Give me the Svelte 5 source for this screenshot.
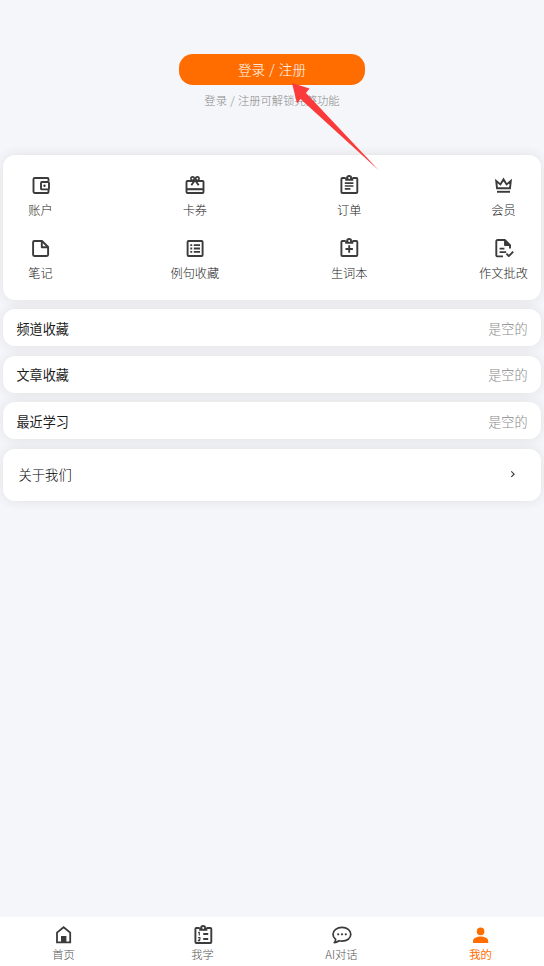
<script lang="ts">
  let active = $state('me');

  const tools = [
    { icon: 'wallet', label: '账户' },
    { icon: 'gift', label: '卡券' },
    { icon: 'order', label: '订单' },
    { icon: 'crown', label: '会员' },
    { icon: 'note', label: '笔记' },
    { icon: 'list', label: '例句收藏' },
    { icon: 'words', label: '生词本' },
    { icon: 'essay', label: '作文批改' },
  ];

  const rows = ['频道收藏', '文章收藏', '最近学习'];

  const tabs = [
    { id: 'home', label: '首页' },
    { id: 'study', label: '我学' },
    { id: 'chat', label: 'AI对话' },
    { id: 'me', label: '我的' },
  ];
</script>

{#snippet clipboard()}
  <path d="M8.5 5H5.4a1 1 0 0 0-1 1v13a1 1 0 0 0 1 1h13.9a1 1 0 0 0 1-1V6a1 1 0 0 0-1-1H16" />
  <path d="M8.2 4.4h1.6a2.5 2.2 0 0 1 4.9 0h1.6v3.3H8.2z M12.2 4.1a.9.9 0 1 0 .01 0z" fill="currentColor" fill-rule="evenodd" stroke="none" />
  <path d="M9.8 4.8a2.4 2.1 0 0 1 4.8 0" stroke-width="1.2" />
{/snippet}

{#snippet icon(name: string)}
  <svg class="icon" viewBox="0 0 24 24" width="24" height="24" fill="none" stroke="currentColor" stroke-width="1.9" stroke-linejoin="round">
    {#if name === 'wallet'}
      <path d="M19.5 8V6a1 1 0 0 0-1-1H5.7a1.2 1.2 0 0 0-1.2 1.2v12.6A1.2 1.2 0 0 0 5.7 20h12.8a1 1 0 0 0 1-1v-2" />
      <rect x="12" y="9" width="8" height="7.4" rx="1" />
      <circle cx="15.5" cy="12.7" r="1.2" fill="currentColor" stroke="none" />
    {:else if name === 'gift'}
      <rect x="3.5" y="8" width="17" height="12" rx="1" />
      <path d="M3.5 16.2h17" stroke-width="2.1" />
      <circle cx="9.6" cy="5.6" r="1.7" stroke-width="1.6" />
      <circle cx="14.4" cy="5.6" r="1.7" stroke-width="1.6" />
      <path d="M12 7l-3.7 5.3M12 7l3.7 5.3" />
    {:else if name === 'order'}
      {@render clipboard()}
      <path d="M7.8 10.2h8.6M7.8 13h8.6M7.8 15.8h5.6" stroke-width="1.7" />
    {:else if name === 'crown'}
      <path d="M6 15.2L5.2 8l4.2 3.4 3.1-5 3.1 5L19.8 8l-.8 7.2z" stroke-linejoin="miter" />
      <path d="M6 18.8h13" />
    {:else if name === 'note'}
      <path d="M13 5H5.3a1.2 1.2 0 0 0-1.2 1.2v12.6A1.2 1.2 0 0 0 5.3 20h12.6a1.2 1.2 0 0 0 1.2-1.2V11z" />
      <path d="M12.8 5v6.2h6.3" />
    {:else if name === 'list'}
      <rect x="4.6" y="5" width="15" height="15" rx="1" />
      <path d="M7.3 9.1h1.9M7.3 12.5h1.9M7.3 15.9h1.9M10.8 9.1h6.2M10.8 12.5H17M10.8 15.9H17" stroke-width="1.9" />
    {:else if name === 'words'}
      {@render clipboard()}
      <path d="M12.2 9.3v7.4M8.5 13h7.4" />
    {:else if name === 'essay'}
      <path d="M12 20.4H6.5a1.2 1.2 0 0 1-1.2-1.2V5.2A1.2 1.2 0 0 1 6.5 4h7.3L19 9.2v3.4" />
      <path d="M13.6 4v5.5H19z" fill="currentColor" stroke-width="1" />
      <path d="M8.6 12.6h4.8M8.6 16.2h6.6" stroke-width="1.8" />
      <path d="M15.4 17.7l2.4 2.4 4.4-4.4" />
    {:else if name === 'home'}
      <path d="M5 19.4V9.6L11.6 4.2l6.6 5.4v9.8z" stroke-width="1.8" stroke-linejoin="miter" />
      <path d="M9 19v-6h5.4v6z" fill="currentColor" stroke="none" />
    {:else if name === 'study'}
      {@render clipboard()}
      <path d="M12.2 11h5M12.2 16h5" />
      <path d="M7.2 9.8l1.1-.6v3.4M7.1 14.6H9v1.5l-1.8 1.5H9.2" stroke-width="1.1" />
    {:else if name === 'chat'}
      <path d="M5.6 16.3C3.9 15 3 13.3 3 11.3 3 7.4 7 4.4 12 4.4s8.8 3 8.8 6.9-3.9 6.9-8.8 6.9c-1 0-2-.1-2.9-.4-1.3.9-3 1.8-4.8 1.9 1-1 1.5-2.2 1.3-3.4z" stroke-width="1.7" />
      <g fill="currentColor" stroke="none">
        <circle cx="8.2" cy="11.3" r="1.1" />
        <circle cx="12" cy="11.3" r="1.1" />
        <circle cx="15.8" cy="11.3" r="1.1" />
      </g>
    {:else if name === 'me'}
      <g fill="currentColor" stroke="none">
        <circle cx="11.6" cy="8.4" r="3.8" />
        <path d="M4 20v-2c0-3 4-4.5 7.6-4.5S19.2 15 19.2 18v2z" />
      </g>
    {/if}
  </svg>
{/snippet}

<div class="page">
  <header class="hero">
    <button class="login">登录 / 注册</button>
    <p class="hint">登录 / 注册可解锁完整功能</p>
    <svg class="pointer" viewBox="0 0 88 88" width="88" height="88" aria-hidden="true">
      <path d="M0 0l17.5 5.5-3.5 4.5L87 87.5 8.5 16 5 20.5z" fill="#fb3b3b" />
    </svg>
  </header>

  <main class="cards">
    <section class="card tools">
      {#each tools as t}
        <button class="tool">
          {@render icon(t.icon)}
          <span>{t.label}</span>
        </button>
      {/each}
    </section>

    {#each rows as r}
      <section class="card row">
        <span>{r}</span>
        <span class="empty">是空的</span>
      </section>
    {/each}

    <section class="card about">
      <span>关于我们</span>
      <svg viewBox="0 0 8 8" width="8" height="8" fill="none" stroke="#333" stroke-width="1.1">
        <path d="M2.3 1.4L5.1 4.2 2.3 6.9" />
      </svg>
    </section>
  </main>

  <nav class="tabs">
    {#each tabs as t}
      <button class="tab" class:active={active === t.id} onclick={() => (active = t.id)}>
        {@render icon(t.id)}
        <span>{t.label}</span>
      </button>
    {/each}
  </nav>
</div>

<style>
  :global(body) { margin: 0; background: #f5f6fa; }

  .page {
    height: 966px; overflow: hidden;
    display: flex; flex-direction: column;
    background: #f5f6fa; color: #111;
    font-family: 'Noto Sans CJK SC', 'Noto Sans', sans-serif;
    font-weight: 300;
  }
  button {
    margin: 0; padding: 0; border: 0; background: none;
    font: inherit; color: inherit; cursor: pointer;
  }
  .icon { display: block; color: #3b3b3b; }

  .hero {
    position: relative; box-sizing: border-box;
    flex: 0 0 155px; padding-top: 54px;
    display: flex; flex-direction: column; align-items: center;
  }
  .login {
    width: 186px; height: 31.4px; border-radius: 14px;
    background: #ff6d00; color: #fff;
    font-size: 13.6px; line-height: 31px; word-spacing: 1.2px;
  }
  .hint { margin: 8px 0 0; font-size: 11.3px; line-height: 15px; word-spacing: 0.8px; color: #888; }
  /* red arrow lies over the hint and the card edge */
  .pointer { position: absolute; left: 292px; top: 83px; z-index: 2; }

  .cards {
    flex: 1; padding: 0 3px;
    display: flex; flex-direction: column; gap: 9.4px;
  }
  /* clipped so a card's shadow stays off its neighbours */
  .card {
    box-sizing: border-box; border-radius: 12px;
    background: #fff; box-shadow: 0 0 12px rgba(50, 40, 10, 0.1);
    clip-path: inset(-9px -3px);
  }
  .tools {
    height: 145px; padding: 18px 13px 0;
    display: grid; grid-template-columns: repeat(4, 49px);
    grid-auto-rows: 63px; justify-content: space-between;
  }
  .tool {
    display: flex; flex-direction: column; align-items: center; justify-content: flex-start;
    font-size: 12.2px; line-height: 18px; white-space: nowrap; color: #222;
  }
  .tool span { margin-top: 4px; }

  .row {
    height: 37px; padding: 1px 13.5px 0;
    display: flex; align-items: center; justify-content: space-between;
    font-size: 13.1px; font-weight: 400; color: #1c1c1c;
  }
  .row .empty { font-weight: 300; color: #888; }
  .about {
    height: 52px; padding: 0 24.5px 1px 15.5px;
    display: flex; align-items: center; justify-content: space-between;
    font-size: 13.3px; color: #000;
  }

  .tabs {
    flex: 0 0 49px;
    display: grid; grid-template-columns: repeat(4, 139px); justify-content: center;
    background: #fff;
  }
  .tab {
    display: flex; flex-direction: column; align-items: center; justify-content: flex-start;
    padding-top: 6px; font-size: 11.3px; line-height: 15px; color: #555;
  }
  .tab.active, .tab.active .icon { color: #ff6d00; }
  .tab.active span { font-weight: 400; }
</style>
